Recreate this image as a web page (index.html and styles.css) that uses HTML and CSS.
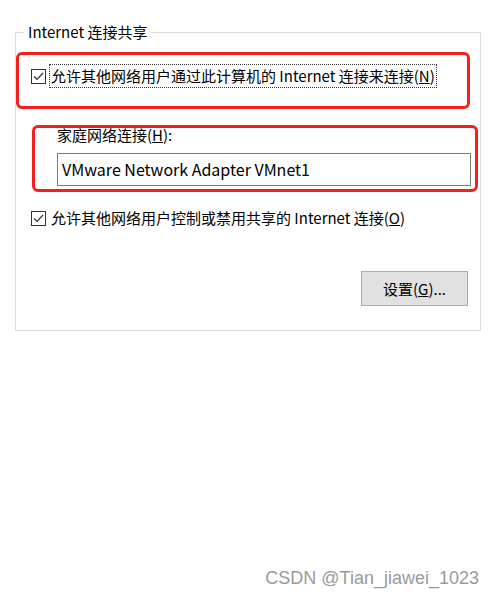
FILE: index.html
```html
<!DOCTYPE html>
<html lang="zh-CN">
<head>
    <meta charset="UTF-8">
    <title>Internet 连接共享</title>
    <link rel="stylesheet" href="styles.css">
</head>
<body>

<div class="group">
    <span class="group-title">Internet 连接共享</span>

    <div class="mark mark-top">
        <label class="check">
            <svg class="box" width="15" height="15" viewBox="0 0 15 15"><rect x="0.5" y="0.5" width="14" height="14" fill="#fff" stroke="#333"/><path d="M3 7.5 L6 10.5 L12 4" fill="none" stroke="#333" stroke-width="1.2"/></svg>
            <span class="focus">允许其他网络用户通过此计算机的 Internet 连接来连接(<u>N</u>)</span>
        </label>
    </div>

    <div class="mark mark-home">
        <div class="field-label">家庭网络连接(<u>H</u>):</div>
        <div class="field">VMware Network Adapter VMnet1</div>
    </div>

    <label class="check check-second">
        <svg class="box" width="15" height="15" viewBox="0 0 15 15"><rect x="0.5" y="0.5" width="14" height="14" fill="#fff" stroke="#333"/><path d="M3 7.5 L6 10.5 L12 4" fill="none" stroke="#333" stroke-width="1.2"/></svg>
        <span>允许其他网络用户控制或禁用共享的 Internet 连接(<u>O</u>)</span>
    </label>

    <div class="actions">
        <button class="button">设置(<u>G</u>)...</button>
    </div>
</div>

<div class="watermark">CSDN @Tian_jiawei_1023</div>

</body>
</html>
```

FILE: styles.css
```css
body {
    margin: 0;
    background: #fff;
    font-family: "Noto Sans CJK SC", sans-serif;
    font-size: 15px;
    color: #000;
    width: 496px;
    height: 600px;
    position: relative;
}
.group {
    position: relative;
    margin: 32px 0 0 15px;
    width: 464px;
    height: 297px;
    border: 1px solid #dcdcdc;
    display: flex;
    flex-direction: column;
}
.group-title {
    position: absolute;
    left: 8px;
    top: -11px;
    padding: 0 4px;
    background: #fff;
    line-height: 20px;
}
.mark {
    border: 3px solid #f41f1f;
    border-radius: 6px;
}
.mark-top {
    margin-top: 19px;
    width: 448px;
    height: 51px;
}
.check {
    display: flex;
    align-items: center;
    gap: 5px;
    line-height: 20px;
}
.mark-top .check {
    margin: 11px 0 0 12px;
}
.box {
    flex: none;
}
.focus {
    outline: 1px dotted #333;
    outline-offset: 1px;
}
.mark-home {
    margin: 16px 0 0 16px;
    height: 61px;
    padding-left: 22px;
    width: 418px;
}
.field-label {
    line-height: 20px;
    margin-top: -3px;
}
.field {
    margin-top: 8px;
    height: 31px;
    border: 1px solid #7a7a7a;
    padding-left: 4px;
    font-size: 16px;
    line-height: 30px;
    width: 408px;
}
.check-second {
    margin: 16px 0 0 15px;
}
.actions {
    display: flex;
    justify-content: flex-end;
    margin: 43px 12px 0 0;
}
.button {
    width: 107px;
    height: 35px;
    background: #e1e1e1;
    border: 1px solid #adadad;
    font-family: inherit;
    font-size: 15px;
    padding: 0;
    color: #000;
}
.watermark {
    position: absolute;
    right: 17px;
    top: 568px;
    font-family: "Liberation Sans", sans-serif;
    font-size: 18px;
    color: #9a9a9a;
}
```
